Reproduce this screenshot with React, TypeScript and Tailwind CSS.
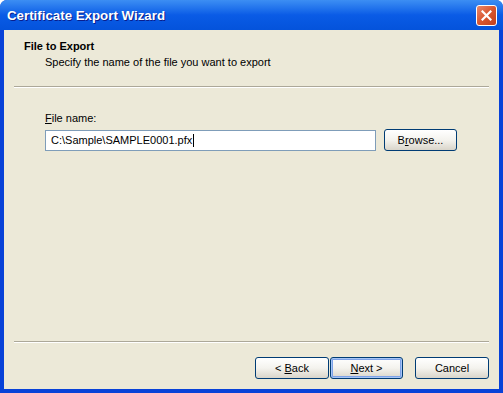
import React from "react";

function XpButton({
  children,
  isDefault,
  width = "w-[74px]",
}: {
  children: React.ReactNode;
  isDefault?: boolean;
  width?: string;
}) {
  return (
    <button
      className={`${width} flex h-[22px] items-center justify-center rounded-[3px] border border-[#003C74] bg-gradient-to-b from-[#FFFFFF] via-[#F4F3EE] to-[#D9D5CA] text-[11px] text-black ${
        isDefault ? "shadow-[inset_0_0_0_1px_#A6C5F5,inset_0_0_0_2px_#7DA2E8]" : ""
      }`}
    >
      {children}
    </button>
  );
}

export default function App() {
  return (
    <div
      className="flex h-[393px] w-[503px] flex-col overflow-hidden rounded-t-[7px] bg-[#0842D8]"
      style={{ fontFamily: '"Liberation Sans", Tahoma, sans-serif' }}
    >
      {/* title bar */}
      <div className="flex h-[30px] shrink-0 items-center justify-between bg-gradient-to-b from-[#3C8EF3] via-[#0A5BE6] to-[#0453DB] pl-[7px] pr-[6px]">
        <span className="pt-[1px] text-[13.3px] font-bold text-white [text-shadow:1px_1px_0_#0A1E8C]">
          Certificate Export Wizard
        </span>
        <div className="flex h-[21px] w-[21px] items-center justify-center rounded-[3px] border border-white bg-gradient-to-br from-[#E9876A] via-[#D9562F] to-[#C2401C]">
          <svg width="11" height="11" viewBox="0 0 11 11">
            <path d="M1.5 1.5 L9.5 9.5 M9.5 1.5 L1.5 9.5" stroke="white" strokeWidth="2.2" strokeLinecap="square" />
          </svg>
        </div>
      </div>

      {/* body */}
      <div className="mx-[4px] mb-[4px] flex flex-1 flex-col bg-[#ECE9D8] text-[11px] text-black">
        <div className="h-[56px] shrink-0 pl-[20px] pt-[10px]">
          <div className="font-bold leading-[13px]">File to Export</div>
          <div className="mt-[3px] pl-[21px] leading-[13px]">Specify the name of the file you want to export</div>
        </div>
        <div className="mx-[10px] border-t border-b border-t-[#ACA899] border-b-white" />

        <div className="pl-[41px] pt-[24px]">
          <div className="leading-[13px]">
            <span className="underline">F</span>ile name:
          </div>
          <div className="mt-[4px] flex items-center">
            <div className="flex h-[21px] w-[331px] items-center border border-[#7F9DB9] bg-white pl-[5px] leading-[13px]">
              C:\Sample\SAMPLE0001.pfx
              <span className="ml-[1px] inline-block h-[13px] w-[1px] bg-black" />
            </div>
            <div className="ml-[8px]">
              <XpButton width="w-[73px]">
                B<span className="underline">r</span>owse...
              </XpButton>
            </div>
          </div>
        </div>

        <div className="flex-1" />

        <div className="mx-[10px] border-t border-b border-t-[#ACA899] border-b-white" />
        <div className="flex justify-end pr-[10px] pt-[14px] pb-[10px]">
          <XpButton>
            &lt; <span className="ml-[3px] underline">B</span>ack
          </XpButton>
          <div className="ml-[1px]">
            <XpButton isDefault width="w-[73px]">
              <span className="underline">N</span>ext &gt;
            </XpButton>
          </div>
          <div className="ml-[12px]">
            <XpButton>Cancel</XpButton>
          </div>
        </div>
      </div>
    </div>
  );
}
